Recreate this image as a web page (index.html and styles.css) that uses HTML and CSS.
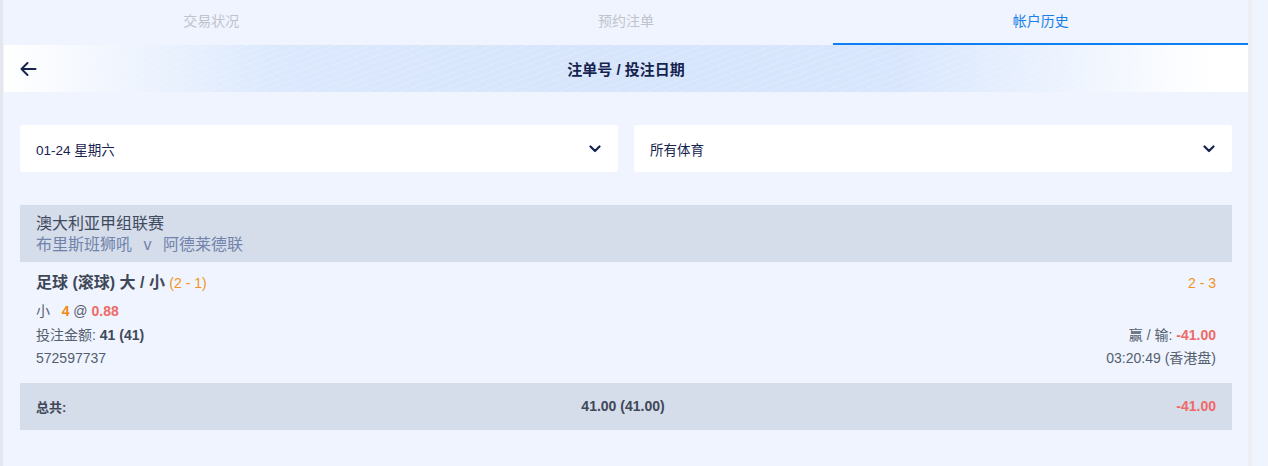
FILE: index.html
```html
<!DOCTYPE html>
<html lang="zh">
<head>
<meta charset="utf-8">
<title>帐户历史</title>
<link rel="stylesheet" href="styles.css">
</head>
<body>
<div class="page">
  <div class="app">
    <nav class="tabs">
      <div class="tab">交易状况</div>
      <div class="tab">预约注单</div>
      <div class="tab active">帐户历史</div>
    </nav>
    <header class="titlebar">
      <svg class="back" width="18" height="16" viewBox="0 0 18 16"><path d="M16.5 8H2.5M8.5 2L2.5 8l6 6" fill="none" stroke="#17234f" stroke-width="2" stroke-linecap="round" stroke-linejoin="round"/></svg>
      <h1 class="title">注单号 / 投注日期</h1>
    </header>
    <section class="filters">
      <div class="select"><span>01-24 星期六</span><svg width="12" height="8" viewBox="0 0 12 8"><path d="M1.5 1.5L6 6l4.5-4.5" fill="none" stroke="#17234f" stroke-width="2.2" stroke-linecap="round" stroke-linejoin="round"/></svg></div>
      <div class="select"><span>所有体育</span><svg width="12" height="8" viewBox="0 0 12 8"><path d="M1.5 1.5L6 6l4.5-4.5" fill="none" stroke="#17234f" stroke-width="2.2" stroke-linecap="round" stroke-linejoin="round"/></svg></div>
    </section>
    <section class="bets">
      <div class="league">
        <div class="league-name">澳大利亚甲组联赛</div>
        <div class="teams">布里斯班狮吼 <span class="vs">v</span> 阿德莱德联</div>
      </div>
      <div class="bet">
        <div class="row row-title">
          <div class="bet-title">足球 (滚球) 大 / 小 <span class="score">(2 - 1)</span></div>
          <div class="score">2 - 3</div>
        </div>
        <div class="row">
          <div>小 &nbsp; <b class="orange">4</b> @ <b class="red">0.88</b></div>
        </div>
        <div class="row">
          <div>投注金额: <b class="dark">41 (41)</b></div>
          <div>赢 / 输: <b class="red">-41.00</b></div>
        </div>
        <div class="row">
          <div>572597737</div>
          <div>03:20:49 (香港盘)</div>
        </div>
      </div>
      <div class="total">
        <div class="total-label">总共:</div>
        <div class="total-amount">41.00 (41.00)</div>
        <div class="total-win red">-41.00</div>
      </div>
    </section>
  </div>
  <div class="gutter"></div>
</div>
</body>
</html>
```

FILE: styles.css
```css
* { box-sizing: border-box; margin: 0; padding: 0; }
html, body { height: 100%; }
body {
  background: #f0f4fd;
  font-family: "Liberation Sans", Arial, "Noto Sans CJK SC", sans-serif;
  color: #4f5869;
  font-size: 14px;
}
.page { display: flex; min-height: 466px; }
.app {
  width: 1248px;
  border-left: 3px solid #e4e7ed;
  background: #eff4fe;
  padding-left: 1px;
}
.gutter { width: 4px; background: #eceef3; }

.tabs { display: flex; height: 45px; }
.tab {
  flex: 1;
  text-align: center;
  color: #bfc3cc;
  font-size: 14px;
  line-height: 42px;
  border-bottom: 2px solid transparent;
}
.tab.active { color: #1a80e6; border-bottom-color: #0d7ff2; }

.titlebar {
  position: relative;
  height: 47px;
  display: flex;
  align-items: center;
  justify-content: center;
  background:
    repeating-linear-gradient(160deg, rgba(255,255,255,0) 0 5px, rgba(255,255,255,0.18) 5px 6px),
    linear-gradient(90deg, #ffffff 0%, #dbe8fd 22%, #d6e5fb 50%, #d8e6fd 72%, #ffffff 97%);
}
.back { position: absolute; left: 15px; top: 16px; }
.title { font-size: 15px; font-weight: bold; color: #17234f; }

.filters {
  display: flex;
  gap: 16px;
  padding: 33px 16px 33px;
}
.select {
  flex: 1;
  height: 47px;
  background: #fff;
  border-radius: 3px;
  display: flex;
  align-items: center;
  justify-content: space-between;
  padding: 0 17px 0 16px;
  color: #17234f;
  font-size: 13.5px;
}

.bets { padding: 0 16px; }
.league {
  background: #d5dcea;
  height: 57px;
  padding: 8px 16px 0;
  font-size: 16px;
  line-height: 21px;
}
.league-name { color: #3f4a5e; }
.teams { color: #7083ab; }
.vs { margin: 0 7px; }

.bet { padding: 7px 16px 12px; }
.row {
  display: flex;
  justify-content: space-between;
  align-items: baseline;
  line-height: 23.5px;
  color: #555e6e;
  font-size: 14px;
}
.row-title { line-height: 28px; margin-bottom: 3px; }
.bet-title { font-size: 16px; font-weight: bold; color: #3f4858; }
.bet-title .score { font-weight: normal; font-size: 14px; }
.score { color: #f39323; font-size: 14px; }
.orange { color: #f08a10; }
.red { color: #ef6a67; font-weight: bold; }
.dark { color: #3f4858; }

.total {
  background: #d5dcea;
  height: 47px;
  display: grid;
  grid-template-columns: 1fr auto 1fr;
  align-items: center;
  padding: 0 16px;
  font-size: 14px;
  font-weight: bold;
  color: #3f4858;
}
.total-label { font-size: 13px; }
.total-amount { margin-right: 6px; }
.total-win { text-align: right; }
```
